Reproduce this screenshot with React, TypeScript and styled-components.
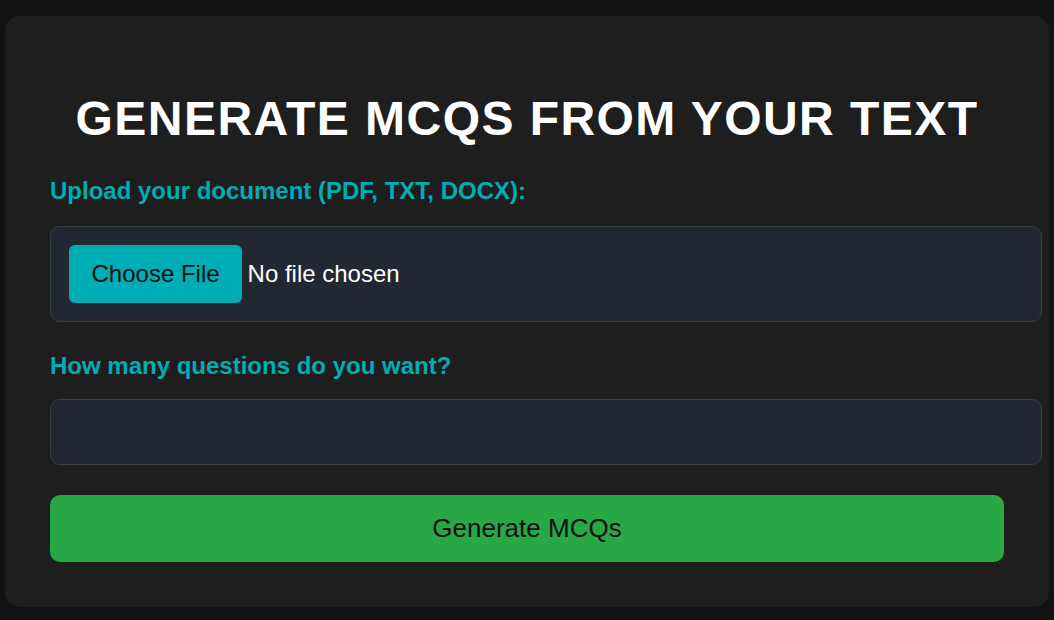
import React from "react";
import styled, { createGlobalStyle } from "styled-components";

const GlobalStyle = createGlobalStyle`
  html, body {
    margin: 0;
    padding: 0;
    background: #121212;
    font-family: "Liberation Sans", Arial, sans-serif;
  }
`;

const Page = styled.div`
  padding: 16px 5px 13px;
`;

const Card = styled.main`
  background: #1e1e1e;
  border-radius: 15px;
  padding: 45px;
  display: flex;
  flex-direction: column;
`;

const Title = styled.h1`
  margin: 30px 0 31px;
  color: #ffffff;
  font-size: 48px;
  font-weight: 700;
  letter-spacing: 1.45px;
  text-align: center;
  text-transform: uppercase;
  line-height: normal;
`;

const Field = styled.div<{ $gap: number }>`
  display: flex;
  flex-direction: column;
  align-items: flex-start;
  gap: ${(p) => p.$gap}px;
  margin-bottom: 30px;
`;

const Label = styled.label`
  color: #00adb5;
  font-size: 24px;
  font-weight: 700;
  line-height: normal;
`;

const Input = styled.input`
  box-sizing: content-box;
  width: 100%;
  padding: 18px;
  margin: 0;
  background: #222831;
  border: 1px solid #393e46;
  border-radius: 10px;
  color: #ffffff;
  font-family: "Liberation Sans", Arial, sans-serif;
  font-size: 24px;
  line-height: normal;
  outline: none;

  &::file-selector-button {
    background: #00adb5;
    color: #111111;
    border: none;
    border-radius: 6px;
    padding: 15px 22.5px;
    margin: 0 5.5px 0 0;
    font-family: "Liberation Sans", Arial, sans-serif;
    font-size: 24px;
    cursor: pointer;
  }
`;

const SubmitButton = styled.button`
  width: 100%;
  padding: 18px 0;
  background: #28a745;
  color: #111111;
  border: none;
  border-radius: 10px;
  font-family: "Liberation Sans", Arial, sans-serif;
  font-size: 26px;
  line-height: 31px;
  cursor: pointer;
`;

export default function App() {
  return (
    <>
      <GlobalStyle />
      <Page>
        <Card>
          <Title>Generate MCQs from your text</Title>
          <Field $gap={21}>
            <Label htmlFor="doc">Upload your document (PDF, TXT, DOCX):</Label>
            <Input id="doc" type="file" accept=".pdf,.txt,.docx" />
          </Field>
          <Field $gap={19}>
            <Label htmlFor="num">How many questions do you want?</Label>
            <Input id="num" type="number" min={1} />
          </Field>
          <SubmitButton type="button">Generate MCQs</SubmitButton>
        </Card>
      </Page>
    </>
  );
}
